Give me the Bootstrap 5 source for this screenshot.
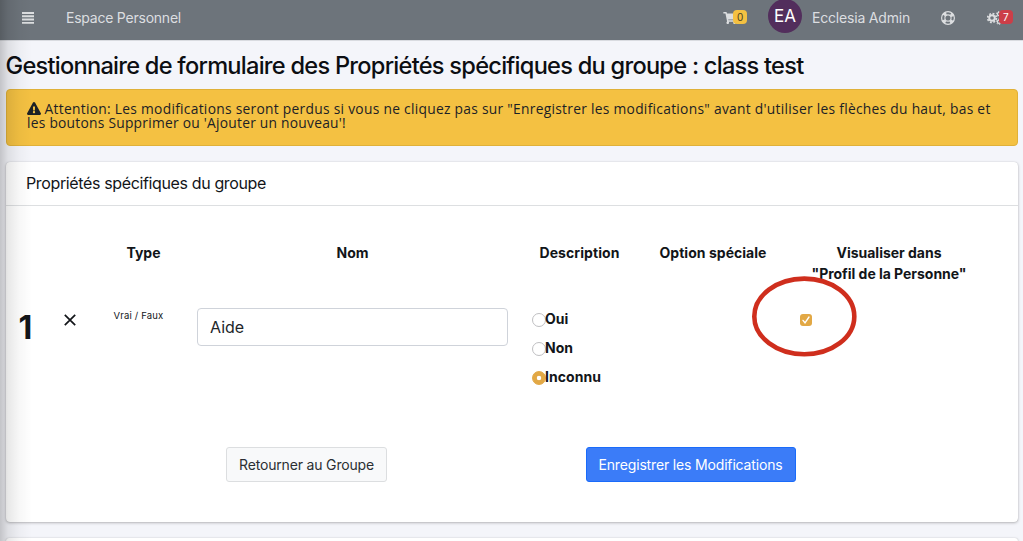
<!DOCTYPE html>
<html lang="fr">
<head>
<meta charset="utf-8">
<meta name="viewport" content="width=device-width, initial-scale=1">
<title>Espace Personnel</title>
<link href="https://cdn.jsdelivr.net/npm/bootstrap@5.3.0/dist/css/bootstrap.min.css" rel="stylesheet">
<style>
body{font-family:Inter,"Liberation Sans",sans-serif;font-size:14px;line-height:21px;color:#121519;background:#f4f5fa;height:541px;overflow:hidden;position:relative}
.edge-shade{position:absolute;inset:0 auto 0 0;width:32px;z-index:5;pointer-events:none;background:linear-gradient(90deg,rgba(0,0,0,.2),rgba(0,0,0,.09) 25%,rgba(0,0,0,.03) 60%,transparent)}
.topbar{height:40px;background:#6d747b;color:#dcdee0;padding:0 9px 5px 21px;box-shadow:0 1px 0 #d9dbe0}
.topbar svg,.warn svg{fill:currentColor;display:block}
.topbar .badge{position:absolute;font-size:10px;font-weight:400;line-height:14px;height:14px;padding:0 4px;border-radius:4px}
.avatar{width:34px;height:34px;border-radius:50%;background:#522e5c;color:#fff;font-size:17px;line-height:34px;text-align:center;margin-top:-3px}
.ttl{font-size:23.6px;line-height:30px;font-weight:500;margin:11px 0 8px 5.5px;color:#0c0e12;white-space:nowrap}
.warn{margin:0 5px 16px 6px;height:57px;padding:12px 20px;background:#f4c142;border:1px solid #e0b139;border-radius:4px;font-family:"Open Sans","Noto Sans",sans-serif;font-size:13.8px;line-height:14px;color:#1c2126;white-space:nowrap}
.warn svg{display:inline-block;vertical-align:-1px}
.panel{margin:0 5px 16px 6px;border:0;border-radius:4px;box-shadow:0 0 1px rgba(0,0,0,.2),0 1px 3px rgba(0,0,0,.25);height:360px;color:inherit}
.panel-next{height:3px;margin-bottom:0;border-radius:4px 4px 0 0}
.panel-head{height:44px;padding:0 20px;border-bottom:1px solid #dddfe1;font-size:16px}
.fields{display:grid;grid-template-columns:39px 50px 97px 321px 133px 134px 218px;margin-top:36px;font-weight:700;text-align:center}
.fields>div{min-width:0}
.num{font-size:32px;line-height:32px}
.fields .form-control{height:38px;font-size:16px;border-color:#cfd3da;border-radius:4px;color:#212529;padding:6px 12px}
.opt{height:29px;display:flex;align-items:center}
.opt .form-check-input{width:14px;height:14px;margin:2px -1px 0 0;border-color:#bfbfc2;flex:none}
.opt .form-check-input:checked{border-color:#e2a845;background:radial-gradient(circle,#fff 1.9px,#e2a845 2.6px)}
.tick{width:12px;height:12px;border-radius:3px;background:#e2a845;display:block}
.ring{position:absolute;left:746px;top:114px}
.btn{font-size:14px;line-height:21px;height:35px;border-radius:3px;padding:6px 0}
</style>
</head>
<body>
<div class="edge-shade"></div>
<nav class="topbar d-flex align-items-center">
  <svg width="14" height="12" viewBox="0 0 14 12"><path d="M1 0h12v1.9H1zM1 3.3h12v1.9H1zM1 6.6h12v1.9H1zM1 9.9h12v1.9H1z"/></svg>
  <span id="t1" style="margin-left:31px">Espace Personnel</span>
  <div class="ms-auto d-flex align-items-center">
    <div class="position-relative" style="width:45px"><svg width="14" height="12" viewBox="0 0 576 512"><path d="M528.12 301.319l47.273-208C578.806 78.301 567.391 64 551.99 64H159.208l-9.166-44.81C147.758 8.021 137.93 0 126.529 0H24C10.745 0 0 10.745 0 24v16c0 13.255 10.745 24 24 24h69.883l70.248 343.435C147.325 417.1 136 435.222 136 456c0 30.928 25.072 56 56 56s56-25.072 56-56c0-15.674-6.447-29.835-16.824-40h209.647C430.447 426.165 424 440.326 424 456c0 30.928 25.072 56 56 56s56-25.072 56-56c0-22.172-12.888-41.332-31.579-50.405l5.517-24.276c3.413-15.018-8.002-29.319-23.403-29.319H218.117l-6.545-32h293.145c11.206 0 20.92-7.754 23.403-18.681z"/></svg>
      <span class="badge" style="left:10px;top:-2px;background:#f4c142;color:#4a4020">0</span></div>
    <div class="avatar">EA</div>
    <span id="t2" style="margin-left:10px;width:129px">Ecclesia Admin</span>
    <svg width="14" height="14" viewBox="0 0 14 14"><g fill="none" stroke="currentColor"><circle cx="7" cy="7" r="6.4" stroke-width="1.2"/><circle cx="7" cy="7" r="3.1" stroke-width="1.1"/><circle cx="7" cy="7" r="4.9" stroke-width="3.2" stroke-dasharray="3.1 4.597" stroke-dashoffset="-2.3"/></g></svg>
    <div class="position-relative" style="width:27px;margin-left:32px"><svg width="15" height="14" viewBox="0 0 15 14"><g fill="none" stroke="currentColor"><circle cx="5" cy="7" r="2.8" stroke-width="2"/><circle cx="5" cy="7" r="4.4" stroke-width="1.7" stroke-dasharray="1.9 1.556"/><circle cx="12" cy="3" r="1.6" stroke-width="1.3"/><circle cx="12" cy="3" r="2.6" stroke-width="1" stroke-dasharray="1.3 1.42"/><circle cx="12" cy="10.8" r="1.6" stroke-width="1.3"/><circle cx="12" cy="10.8" r="2.6" stroke-width="1" stroke-dasharray="1.3 1.42"/></g></svg>
      <span class="badge" style="left:12px;top:-1px;background:#cc3e48;color:#fff">7</span></div>
  </div>
</nav>
<h1 class="ttl"><span id="t3">Gestionnaire de formulaire des Propriétés spécifiques du groupe : class test</span></h1>
<div class="warn"><svg width="14" height="13" viewBox="0 0 576 512" preserveAspectRatio="none"><path d="M569.517 440.013C587.975 472.007 564.806 512 527.94 512H48.054c-36.937 0-59.999-40.055-41.577-71.987L246.423 23.985c18.467-32.009 64.72-31.951 83.154 0l239.94 416.028zM288 354c-25.405 0-46 20.595-46 46s20.595 46 46 46 46-20.595 46-46-20.595-46-46-46zm-43.673-165.346l7.418 136c.347 6.364 5.609 11.346 11.982 11.346h48.546c6.373 0 11.635-4.982 11.982-11.346l7.418-136c.375-6.874-5.098-12.654-11.982-12.654h-63.383c-6.884 0-12.356 5.78-11.981 12.654z"/></svg>
<span id="t4">Attention: Les modifications seront perdus si vous ne cliquez pas sur "Enregistrer les modifications" avant d'utiliser les flèches du haut, bas et</span><br><span id="t5">les boutons Supprimer ou 'Ajouter un nouveau'!</span></div>
<section class="card panel">
  <div class="panel-head d-flex align-items-center"><span id="t6">Propriétés spécifiques du groupe</span></div>
  <div class="fields">
    <div></div><div></div><div><span id="t7">Type</span></div><div>Nom</div><div><span id="t8">Description</span></div><div><span id="t9">Option spéciale</span></div><div><span id="t10">Visualiser dans</span><br><span id="t11">"Profil de la Personne"</span></div>
    <div class="num" style="padding-top:28px">1</div>
    <div style="padding-top:30px"><svg width="12" height="12" viewBox="0 0 12 12" class="d-block mx-auto"><path d="M.8.8l10.4 10.4M11.2.8L.8 11.2" stroke="#121519" stroke-width="1.7"/></svg></div>
    <div class="fw-normal" style="font-size:9.5px;padding:21px 10px 0 0"><span id="t12">Vrai / Faux</span></div>
    <div style="padding:24px 5px 0 5px"><input class="form-control" value="Aide" aria-label="Nom"></div>
    <div style="padding:20px 0 0 19px">
      <label class="opt"><input class="form-check-input" type="radio" name="v">Oui</label>
      <label class="opt"><input class="form-check-input" type="radio" name="v">Non</label>
      <label class="opt"><input class="form-check-input" type="radio" name="v" checked><span id="t13">Inconnu</span></label>
    </div>
    <div></div>
    <div style="padding:30px 0 0 20px"><svg class="tick" viewBox="0 0 12 12"><path d="M3 6.4l2 2.4L9 3" fill="none" stroke="#fff" stroke-width="1.4" stroke-linecap="round"/></svg></div>
  </div>
  <svg class="ring" width="106" height="82" viewBox="0 0 106 82"><ellipse cx="52.3" cy="40.4" rx="50" ry="37.8" fill="none" stroke="#cf2e1d" stroke-width="4.6"/></svg>
  <div class="d-flex" style="margin:56px 0 0 220px">
    <button class="btn btn-light" style="width:161px;background:#f8f9fa;border-color:#dcdee0;color:#2b2f33"><span id="t14">Retourner au Groupe</span></button>
    <button class="btn btn-primary" style="width:210px;margin-left:198.5px;background:#3b7cf8;border-color:#1a6bfa"><span id="t15">Enregistrer les Modifications</span></button>
  </div>
</section>
<section class="card panel panel-next"></section>
<script src="https://cdn.jsdelivr.net/npm/bootstrap@5.3.0/dist/js/bootstrap.bundle.min.js"></script>
<script>
const widths={t1:115,t2:98,t3:798,t4:946,t5:319,t6:240,t7:34,t8:80,t9:107,t10:105,t11:155,t12:50,t13:56,t14:135,t15:184};
for(const [id,w] of Object.entries(widths)){
  const el=document.getElementById(id), r=document.createRange();
  r.selectNodeContents(el);
  el.style.letterSpacing=((w-r.getBoundingClientRect().width)/el.textContent.length)+'px';
}
</script>
</body>
</html>
